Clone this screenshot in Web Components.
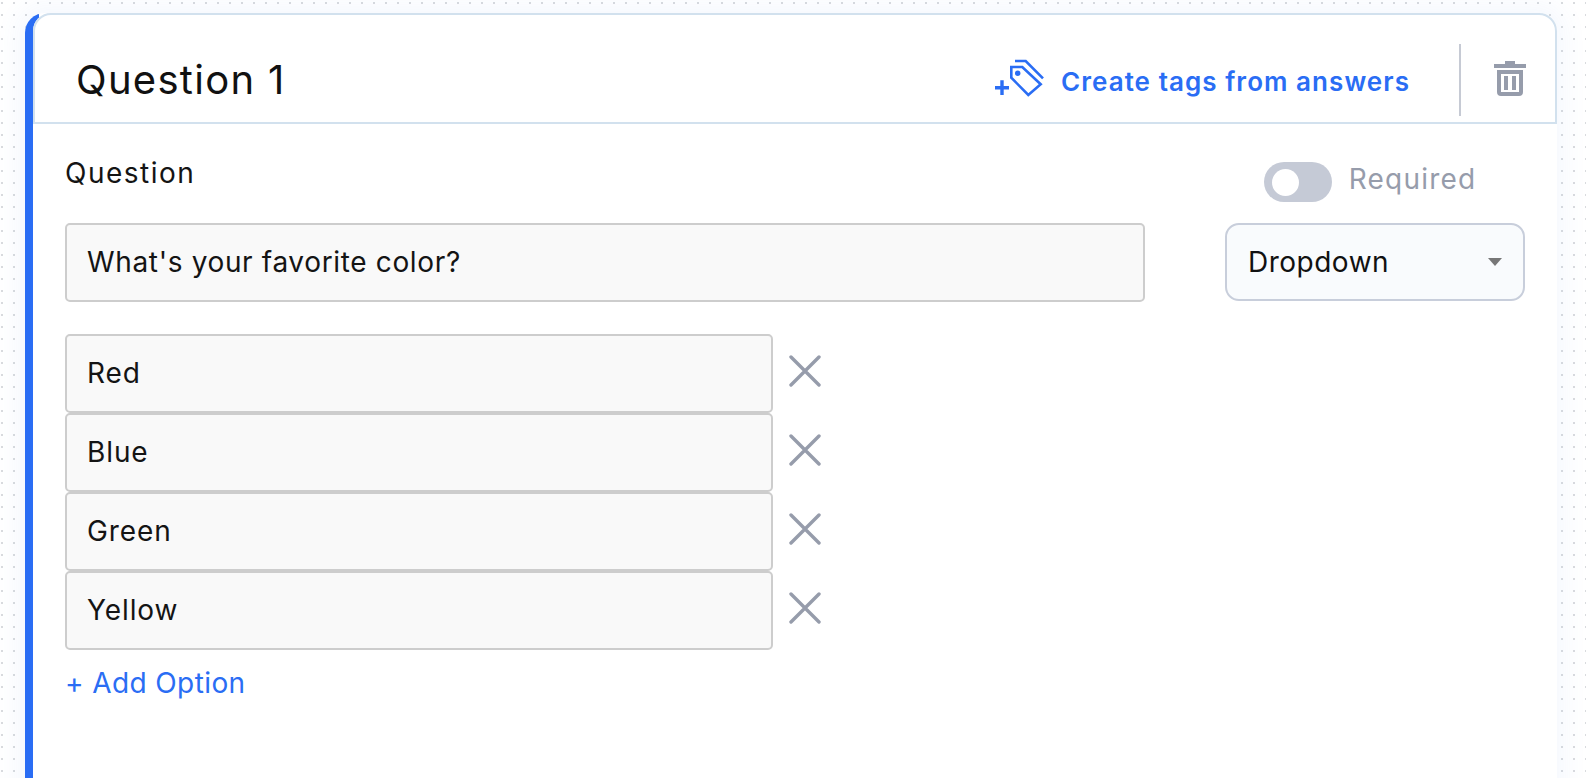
<!DOCTYPE html>
<html>
<head>
<meta charset="utf-8">
<style>
html, body { height: 100%; }
body {
  margin: 0;
  padding: 13px 0 0 25px;
  box-sizing: border-box;
  overflow: hidden;
  background-color: #fff;
  background-image: radial-gradient(circle at 2px 3px, #d9dbde 1px, transparent 1.4px);
  background-size: 12px 12px;
  font-family: Inter, "Noto Sans", sans-serif;
}
</style>
</head>
<body>
<question-card>
  <card-header slot="header">Question 1</card-header>
  <question-grid>
    <field-label slot="label">Question</field-label>
    <toggle-switch slot="toggle">Required</toggle-switch>
    <text-box slot="input" style="letter-spacing: 0.65px">What's your favorite color?</text-box>
    <select-box slot="select">Dropdown</select-box>
  </question-grid>
  <option-list>
    <option-row>Red</option-row>
    <option-row>Blue</option-row>
    <option-row>Green</option-row>
    <option-row>Yellow</option-row>
  </option-list>
  <add-option>+ Add Option</add-option>
</question-card>

<script>
const questionCardTemplate = document.createElement('template');
questionCardTemplate.innerHTML = `
<style>
:host {
  display: block;
  width: 1532px;
  height: 800px;
  box-sizing: border-box;
  padding-left: 8px;
  background: linear-gradient(to right, #2a6df4 14px, transparent 14px);
  border-radius: 20px 18px 0 0;
  box-shadow: 0 0 22px 10px rgba(70, 130, 240, 0.05);
}
.inner {
  background: #fff;
  height: 100%;
  border-radius: 18px 18px 0 0;
}
.body {
  padding: 32px 0 0 32px;
}
</style>
<div class="inner">
  <slot name="header"></slot>
  <div class="body"><slot></slot></div>
</div>
`;
class QuestionCard extends HTMLElement {
  constructor() {
    super();
    this.attachShadow({mode: 'open'});
    this.shadowRoot.appendChild(questionCardTemplate.content.cloneNode(true));
  }
}
customElements.define('question-card', QuestionCard);

const cardHeaderTemplate = document.createElement('template');
cardHeaderTemplate.innerHTML = `
<style>
:host {
  display: flex;
  align-items: center;
  height: 111px;
  box-sizing: border-box;
  border: 2px solid #d2e1ee;
  border-radius: 18px 18px 0 0;
  padding: 22px 29px 0 41px;
  color: #111;
}
.title {
  font-size: 40px;
  font-weight: 400;
  letter-spacing: 1.3px;
  flex: 1;
}
.tags {
  display: flex;
  align-items: center;
  color: #2a6df4;
  font-size: 26px;
  font-weight: 600;
  letter-spacing: 1.05px;
  gap: 17px;
}
.tags svg { display: block; margin-top: -4px; }
.tags span { padding-top: 3px; }
.divider {
  width: 2px;
  height: 72px;
  background: #c6cad4;
  margin: 0 33px 0 49px;
}
.trash { display: block; margin-top: -2px; }
</style>
<div class="title"><slot></slot></div>
<div class="tags">
  <svg width="49" height="38" viewBox="0 0 49 38" fill="none" stroke="#2a6df4" stroke-width="2.6">
    <path d="M0 28.700h14M7 21.300v14.700" stroke-width="3.400"/>
    <path d="M16.300 8h11l18.400 17.300-12.400 10.700-17-17.300z"/>
    <circle cx="22.700" cy="14.300" r="2.700" fill="#2a6df4" stroke="none"/>
    <path d="M20 2h10.700L48 19.300"/>
  </svg>
  <span>Create tags from answers</span>
</div>
<div class="divider"></div>
<svg class="trash" width="32" height="35" viewBox="0 0 32 35" fill="#969cab">
  <path d="M11 0h10v3h11v4H0V3h11z"/>
  <path d="M3 9h26v22a4 4 0 0 1-4 4H7a4 4 0 0 1-4-4zM7 13v18h18V13z" fill-rule="evenodd"/>
  <path d="M10 15h4v14h-4zM18 15h4v14h-4z"/>
</svg>
`;
class CardHeader extends HTMLElement {
  constructor() {
    super();
    this.attachShadow({mode: 'open'});
    this.shadowRoot.appendChild(cardHeaderTemplate.content.cloneNode(true));
  }
}
customElements.define('card-header', CardHeader);

const questionGridTemplate = document.createElement('template');
questionGridTemplate.innerHTML = `
<style>
:host {
  display: grid;
  grid-template-columns: 1080px 300px;
  grid-template-rows: 67px auto;
  column-gap: 80px;
}
</style>
<slot name="label"></slot>
<slot name="toggle"></slot>
<slot name="input"></slot>
<slot name="select"></slot>
`;
class QuestionGrid extends HTMLElement {
  constructor() {
    super();
    this.attachShadow({mode: 'open'});
    this.shadowRoot.appendChild(questionGridTemplate.content.cloneNode(true));
  }
}
customElements.define('question-grid', QuestionGrid);

class FieldLabel extends HTMLElement {
  constructor() {
    super();
    this.attachShadow({mode: 'open'});
    this.shadowRoot.innerHTML = `
    <style>
    :host { display: block; font-size: 28px; letter-spacing: 1.5px; line-height: 34px; color: #141414; }
    </style>
    <slot></slot>`;
  }
}
customElements.define('field-label', FieldLabel);

class ToggleSwitch extends HTMLElement {
  constructor() {
    super();
    this.attachShadow({mode: 'open'});
    this.shadowRoot.innerHTML = `
    <style>
    :host {
      display: flex;
      align-items: center;
      justify-content: center;
      gap: 17px;
      height: 40px;
      margin-top: 6px;
      padding-right: 10px;
      color: #969cab;
      font-size: 28px;
      letter-spacing: 1.2px;
    }
    .track {
      width: 68px;
      height: 40px;
      border-radius: 20px;
      background: #c5cad6;
      display: flex;
      align-items: center;
      padding-left: 8px;
      box-sizing: border-box;
    }
    .knob { width: 27px; height: 27px; border-radius: 50%; background: #fff; }
    span { margin-bottom: 6px; }
    </style>
    <div class="track"><div class="knob"></div></div>
    <span><slot></slot></span>`;
  }
}
customElements.define('toggle-switch', ToggleSwitch);

const textBoxTemplate = document.createElement('template');
textBoxTemplate.innerHTML = `
<style>
:host {
  display: flex;
  align-items: center;
  height: 79px;
  box-sizing: border-box;
  border: 2px solid #cdcdcd;
  border-radius: 5px;
  background: #f9f9f9;
  padding: 0 20px 2px;
  font-size: 28px;
  color: #141414;
}
</style>
<slot></slot>
`;
class TextBox extends HTMLElement {
  constructor() {
    super();
    this.attachShadow({mode: 'open'});
    this.shadowRoot.appendChild(textBoxTemplate.content.cloneNode(true));
  }
}
customElements.define('text-box', TextBox);

class SelectBox extends HTMLElement {
  constructor() {
    super();
    this.attachShadow({mode: 'open'});
    this.shadowRoot.innerHTML = `
    <style>
    :host {
      display: flex;
      align-items: center;
      justify-content: space-between;
      height: 78px;
      box-sizing: border-box;
      border: 2px solid #c8cedb;
      border-radius: 14px;
      background: #f9fbfd;
      padding: 0 21px 0 21px;
      font-size: 28px;
      letter-spacing: 0.5px;
      color: #111;
    }
    .caret {
      width: 0; height: 0;
      border-left: 7.500px solid transparent;
      border-right: 7.500px solid transparent;
      border-top: 8px solid #777;
    }
    </style>
    <span><slot></slot></span>
    <div class="caret"></div>`;
  }
}
customElements.define('select-box', SelectBox);

class OptionList extends HTMLElement {
  constructor() {
    super();
    this.attachShadow({mode: 'open'});
    this.shadowRoot.innerHTML = `
    <style>
    :host { display: flex; flex-direction: column; margin-top: 32px; }
    </style>
    <slot></slot>`;
  }
}
customElements.define('option-list', OptionList);

class OptionRow extends HTMLElement {
  constructor() {
    super();
    this.attachShadow({mode: 'open'});
    this.shadowRoot.innerHTML = `
    <style>
    :host { display: flex; align-items: center; gap: 17px; letter-spacing: 0.9px; }
    text-box { width: 708px; }
    svg { display: block; margin-bottom: 5px; margin-left: -1px; }
    </style>
    <text-box><slot></slot></text-box>
    <svg width="32" height="32" viewBox="0 0 32 32" fill="none" stroke="#969cab" stroke-width="3.400" stroke-linecap="round">
      <path d="M2 2l28 28M30 2L2 30"/>
    </svg>`;
  }
}
customElements.define('option-row', OptionRow);

class AddOption extends HTMLElement {
  constructor() {
    super();
    this.attachShadow({mode: 'open'});
    this.shadowRoot.innerHTML = `
    <style>
    :host {
      display: block;
      margin-top: 16px;
      font-size: 28px;
      letter-spacing: 0.4px;
      line-height: 34px;
      color: #2a6df4;
    }
    </style>
    <slot></slot>`;
  }
}
customElements.define('add-option', AddOption);
</script>
</body>
</html>
